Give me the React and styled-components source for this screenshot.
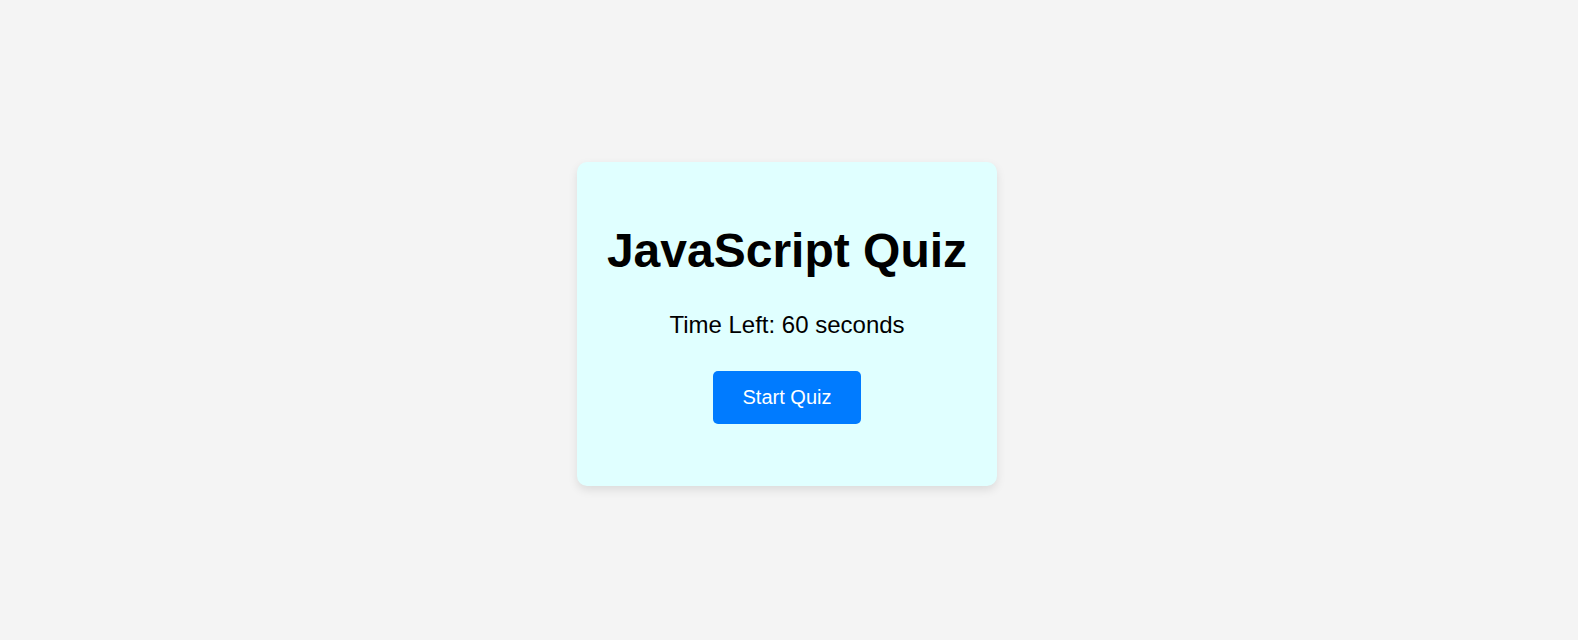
import styled, { createGlobalStyle } from "styled-components";

const GlobalStyle = createGlobalStyle`
  body {
    margin: 0;
    background-color: #f4f4f4;
    font-family: "Liberation Sans", Arial, sans-serif;
  }
`;

const Page = styled.div`
  min-height: 100vh;
  box-sizing: border-box;
  padding: 8px 4px 0 0;
  display: flex;
  align-items: center;
  justify-content: center;
`;

const Card = styled.div`
  width: 420px;
  box-sizing: border-box;
  padding: 61px 20px 62px;
  background-color: #e0ffff;
  border-radius: 10px;
  box-shadow: 0 4px 10px rgba(0, 0, 0, 0.1);
  display: flex;
  flex-direction: column;
  align-items: center;
  text-align: center;
`;

const Title = styled.h1`
  margin: 0;
  font-size: 48px;
  font-weight: 700;
  color: #000;
`;

const Timer = styled.p`
  margin: 33px 0 32px;
  font-size: 24px;
  color: #000;
`;

const StartButton = styled.button`
  padding: 15px 30px;
  font-family: "Liberation Sans", Arial, sans-serif;
  font-size: 20px;
  color: #fff;
  background-color: #007bff;
  border: none;
  border-radius: 5px;
  cursor: pointer;
`;

const App = () => {
  return (
    <>
      <GlobalStyle />
      <Page>
        <Card>
          <Title>JavaScript Quiz</Title>
          <Timer>Time Left: 60 seconds</Timer>
          <StartButton>Start Quiz</StartButton>
        </Card>
      </Page>
    </>
  );
};

export default App;
